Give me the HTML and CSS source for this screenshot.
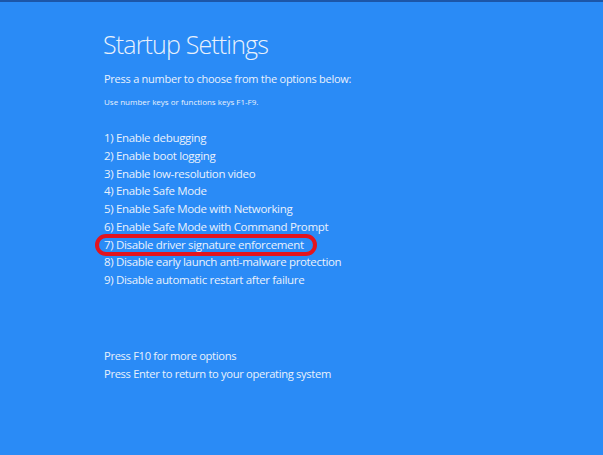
FILE: index.html
```html
<!DOCTYPE html>
<html lang="en">
<head>
<meta charset="utf-8">
<title>Startup Settings</title>
<link rel="stylesheet" href="styles.css">
</head>
<body>
<main class="screen">
  <h1 class="title">Startup Settings</h1>
  <p class="lead">Press a number to choose from the options below:</p>
  <p class="hint">Use number keys or functions keys F1-F9.</p>
  <ol class="options">
    <li>1) Enable debugging</li>
    <li>2) Enable boot logging</li>
    <li>3) Enable low-resolution video</li>
    <li>4) Enable Safe Mode</li>
    <li>5) Enable Safe Mode with Networking</li>
    <li>6) Enable Safe Mode with Command Prompt</li>
    <li class="marked">7) Disable driver signature enforcement</li>
    <li>8) Disable early launch anti-malware protection</li>
    <li>9) Disable automatic restart after failure</li>
  </ol>
  <div class="footer">
    <p>Press F10 for more options</p>
    <p>Press Enter to return to your operating system</p>
  </div>
</main>
</body>
</html>
```

FILE: styles.css
```css
html, body {
  margin: 0;
  padding: 0;
  height: 100%;
}
body {
  background: #2a8bf6;
  border-top: 2px solid #1c56a8;
  box-sizing: border-box;
  font-family: "Open Sans", "Noto Sans", sans-serif;
  color: #e9f1fc;
  overflow: hidden;
}
.screen {
  padding: 25px 0 0 103px;
  display: flex;
  flex-direction: column;
}
.title {
  margin: 0;
  font-size: 25px;
  font-weight: 300;
  line-height: 34px;
  letter-spacing: -0.85px;
}
.lead {
  margin: 10px 0 0 1px;
  font-size: 11px;
  line-height: 16px;
  font-weight: 400;
  letter-spacing: -0.25px;
}
.hint {
  margin: 9px 0 0 1px;
  font-size: 8px;
  line-height: 12px;
  letter-spacing: 0;
}
.options {
  list-style: none;
  margin: 21px 0 0 1px;
  padding: 0;
  font-size: 11.5px;
  line-height: 17.75px;
  letter-spacing: -0.33px;
}
.options li {
  position: relative;
  width: max-content;
}
.marked::before {
  content: "";
  position: absolute;
  left: -9px;
  right: -13px;
  top: -2px;
  bottom: -3px;
  border: 4.5px solid #e3141e;
  border-radius: 12px;
}
.footer {
  margin: 58px 0 0 1px;
  font-size: 11.2px;
  line-height: 18px;
  letter-spacing: -0.33px;
}
.footer p {
  margin: 0;
}
```
